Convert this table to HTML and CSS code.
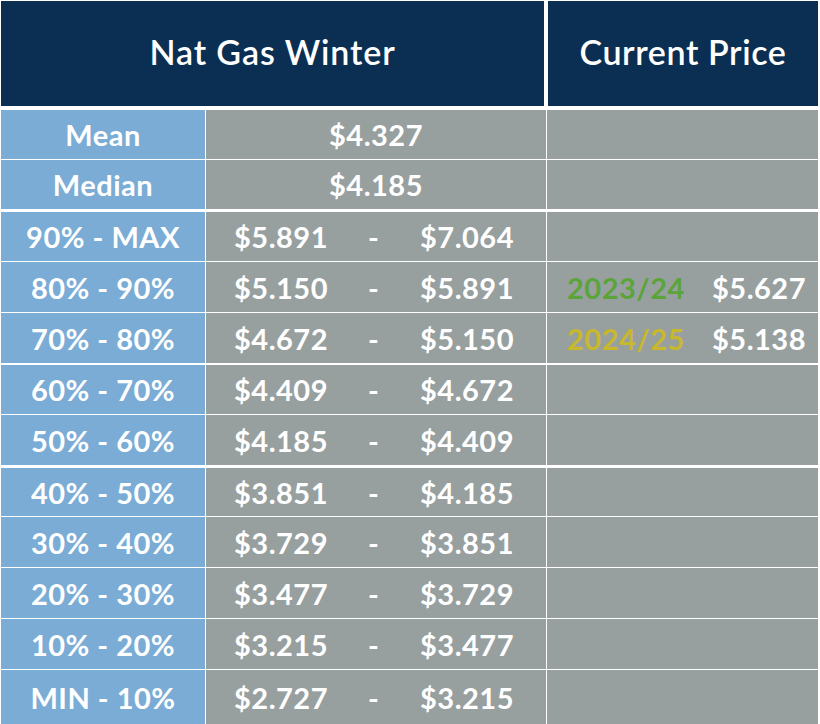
FILE: index.html
```html
<!DOCTYPE html>
<html>
<head>
<meta charset="utf-8">
<link rel="stylesheet" href="styles.css">
</head>
<body>
<div class="table">
  <div class="head">
    <div class="hcell hmain">Nat Gas Winter</div>
    <div class="hcell hcur">Current Price</div>
  </div>
  <div class="row b1">
    <div class="lab">Mean</div>
    <div class="val single">$4.327</div>
    <div class="cur"></div>
  </div>
  <div class="row b3">
    <div class="lab">Median</div>
    <div class="val single">$4.185</div>
    <div class="cur"></div>
  </div>
  <div class="row b1">
    <div class="lab">90% - MAX</div>
    <div class="val range"><span>$5.891</span><span>-</span><span>$7.064</span></div>
    <div class="cur"></div>
  </div>
  <div class="row b1 h50">
    <div class="lab">80% - 90%</div>
    <div class="val range"><span>$5.150</span><span>-</span><span>$5.891</span></div>
    <div class="cur pair"><span class="green">2023/24</span><span>$5.627</span></div>
  </div>
  <div class="row b2 h50">
    <div class="lab">70% - 80%</div>
    <div class="val range"><span>$4.672</span><span>-</span><span>$5.150</span></div>
    <div class="cur pair"><span class="yellow">2024/25</span><span>$5.138</span></div>
  </div>
  <div class="row b1">
    <div class="lab">60% - 70%</div>
    <div class="val range"><span>$4.409</span><span>-</span><span>$4.672</span></div>
    <div class="cur"></div>
  </div>
  <div class="row b3 h50">
    <div class="lab">50% - 60%</div>
    <div class="val range"><span>$4.185</span><span>-</span><span>$4.409</span></div>
    <div class="cur"></div>
  </div>
  <div class="row b1 h48">
    <div class="lab">40% - 50%</div>
    <div class="val range"><span>$3.851</span><span>-</span><span>$4.185</span></div>
    <div class="cur"></div>
  </div>
  <div class="row b1 h50">
    <div class="lab">30% - 40%</div>
    <div class="val range"><span>$3.729</span><span>-</span><span>$3.851</span></div>
    <div class="cur"></div>
  </div>
  <div class="row b1 h50">
    <div class="lab">20% - 30%</div>
    <div class="val range"><span>$3.477</span><span>-</span><span>$3.729</span></div>
    <div class="cur"></div>
  </div>
  <div class="row b1 h50">
    <div class="lab">10% - 20%</div>
    <div class="val range"><span>$3.215</span><span>-</span><span>$3.477</span></div>
    <div class="cur"></div>
  </div>
  <div class="row last">
    <div class="lab">MIN - 10%</div>
    <div class="val range"><span>$2.727</span><span>-</span><span>$3.215</span></div>
    <div class="cur"></div>
  </div>
</div>
</body>
</html>
```
FILE: styles.css
```css
html, body {
  margin: 0;
  padding: 0;
  background: #ffffff;
}
body {
  font-family: "Lato", "Open Sans", sans-serif;
  color: #ffffff;
}
.table {
  width: 818px;
  padding-left: 1px;
  padding-top: 1px;
  box-sizing: border-box;
}
.head {
  display: flex;
  gap: 4px;
  height: 105px;
  margin-bottom: 4px;
}
.hcell {
  background: #0b2f53;
  display: flex;
  align-items: center;
  justify-content: center;
  font-size: 34px;
  font-weight: 600;
  letter-spacing: 0.9px;
  padding-bottom: 4px;
  box-sizing: border-box;
}
.hmain {
  width: 543px;
}
.hcur {
  flex: 1;
  letter-spacing: 0.6px;
}
.row {
  display: flex;
  height: 49px;
  font-size: 29px;
  font-weight: 700;
  letter-spacing: 0.5px;
}
.row.h50 { height: 50px; }
.row.h48 { height: 48px; }
.row.b1 { border-bottom: 1px solid #ffffff; }
.row.b2 { border-bottom: 2px solid #ffffff; }
.row.b3 { border-bottom: 3px solid #ffffff; }
.row.last { height: 54px; }
.lab, .val, .cur {
  display: flex;
  align-items: center;
  box-sizing: border-box;
}
.lab {
  width: 205px;
  background: #7aacd5;
  border-right: 1px solid #ffffff;
  justify-content: center;
}
.val {
  width: 341px;
  background: #98a09f;
  border-right: 1px solid #ffffff;
}
.val.single {
  justify-content: center;
}
.val.range {
  display: grid;
  grid-template-columns: 134px 52px auto;
  align-items: center;
  padding-left: 28px;
}
.cur {
  flex: 1;
  background: #98a09f;
}
.cur.pair {
  display: grid;
  grid-template-columns: 145px auto;
  align-items: center;
  padding-left: 20px;
}
.green {
  color: #5aa43a;
}
.yellow {
  color: #c8b82c;
}
```
